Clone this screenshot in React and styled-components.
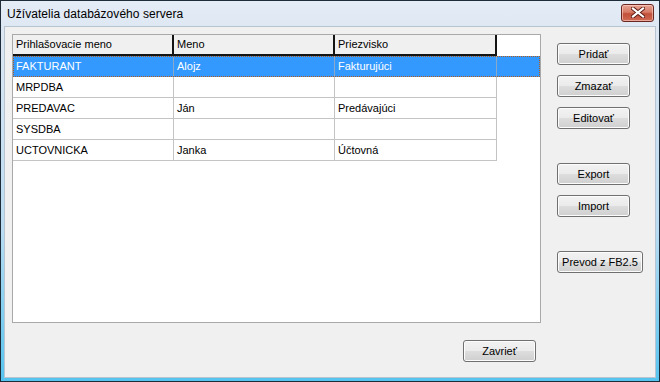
import React from "react";
import styled, { createGlobalStyle, css } from "styled-components";

const Global = createGlobalStyle`
  html, body { margin: 0; padding: 0; background: #ffffff; }
  body { font-family: "Liberation Sans", Arial, sans-serif; font-size: 11px; color: #000; }
  * { box-sizing: border-box; }
`;

const Frame = styled.div`
  width: 660px;
  height: 382px;
  border: 1px solid #1e2b38;
  background: linear-gradient(180deg, #e4ecf6 0%, #dbe6f2 10%, #b9dcf2 60%, #56c4ef 100%);
  padding: 0 3px 3px 3px;
  display: flex;
  flex-direction: column;
`;

const TitleBar = styled.div`
  height: 25px;
  display: flex;
  align-items: center;
  justify-content: space-between;
  padding: 0 2px 0 3px;
`;

const Caption = styled.span`
  font-size: 12px;
  color: #000;
  letter-spacing: 0.05px;
`;

const CloseBtn = styled.div`
  width: 33px;
  height: 18px;
  margin-top: -2px;
  border: 1px solid #6b2620;
  border-radius: 3px;
  background: linear-gradient(180deg, #e7a393 0%, #d77a66 45%, #c2503a 55%, #d06a55 100%);
  box-shadow: inset 0 0 0 1px rgba(255, 220, 210, 0.55);
  display: flex;
  align-items: center;
  justify-content: center;
`;

const Client = styled.div`
  flex: 1;
  background: #f0f0f0;
  border: 1px solid #b8c4d0;
  display: flex;
  flex-direction: column;
  padding: 7px 0 0 7px;
`;

const MainRow = styled.div`
  display: flex;
  align-items: flex-start;
`;

const ListBox = styled.div`
  width: 529px;
  height: 289px;
  background: #ffffff;
  border: 1px solid #a9a9a9;
  display: flex;
  flex-direction: column;
`;

const Row = styled.div`
  display: flex;
  height: 21px;
  ${(p) =>
    p.$selected &&
    css`
      background: #3399ff;
      color: #ffffff;
      outline: 1px dotted #b25c1c;
      outline-offset: -1px;
    `}
`;

const HeaderCell = styled.div`
  width: ${(p) => p.$w}px;
  height: 21px;
  background: #f0f0f0;
  border-right: 2px solid #141414;
  border-bottom: 2px solid #141414;
  padding: 3px 0 0 3px;
  white-space: nowrap;
`;

const Cell = styled.div`
  width: ${(p) => p.$w}px;
  height: 21px;
  border-right: 1px solid ${(p) => (p.$selected ? "#8aa8c8" : "#c4c4c4")};
  border-bottom: 1px solid ${(p) => (p.$selected ? "transparent" : "#c4c4c4")};
  padding: 4px 0 0 3px;
  white-space: nowrap;
`;

const SideColumn = styled.div`
  display: flex;
  flex-direction: column;
  margin: 9px 0 0 16px;
`;

const Button = styled.button`
  height: 22px;
  width: ${(p) => p.$w || 73}px;
  margin-top: ${(p) => p.$gap || 0}px;
  font: inherit;
  color: #000;
  padding: 0;
  border: 1px solid #707070;
  border-radius: 3px;
  background: linear-gradient(180deg, #f2f2f2 0%, #ebebeb 48%, #dddddd 52%, #cfcfcf 100%);
  box-shadow: inset 0 0 0 1px #fcfcfc;
`;

const BottomRow = styled.div`
  display: flex;
  justify-content: flex-end;
  padding: 17px 119px 0 0;
`;

const columns = [
  { key: "login", title: "Prihlašovacie meno", w: 161 },
  { key: "name", title: "Meno", w: 161 },
  { key: "surname", title: "Priezvisko", w: 162 },
];

const users = [
  { login: "FAKTURANT", name: "Alojz", surname: "Fakturujúci", selected: true },
  { login: "MRPDBA", name: "", surname: "" },
  { login: "PREDAVAC", name: "Ján", surname: "Predávajúci" },
  { login: "SYSDBA", name: "", surname: "" },
  { login: "UCTOVNICKA", name: "Janka", surname: "Účtovná" },
];

const CloseIcon = () => (
  <svg width="14" height="11" viewBox="0 0 14 11">
    <path d="M2 1.5 L12 9.5 M12 1.5 L2 9.5" stroke="#5a1a12" strokeWidth="4" strokeLinecap="square" />
    <path d="M2 1.5 L12 9.5 M12 1.5 L2 9.5" stroke="#ffffff" strokeWidth="2.2" strokeLinecap="square" />
  </svg>
);

export default function App() {
  return (
    <>
      <Global />
      <Frame>
        <TitleBar>
          <Caption>Užívatelia databázového servera</Caption>
          <CloseBtn>
            <CloseIcon />
          </CloseBtn>
        </TitleBar>
        <Client>
          <MainRow>
            <ListBox>
              <Row>
                {columns.map((c) => (
                  <HeaderCell key={c.key} $w={c.w}>
                    {c.title}
                  </HeaderCell>
                ))}
              </Row>
              {users.map((u) => (
                <Row key={u.login} $selected={u.selected}>
                  {columns.map((c) => (
                    <Cell key={c.key} $w={c.w} $selected={u.selected}>
                      {u[c.key]}
                    </Cell>
                  ))}
                </Row>
              ))}
            </ListBox>
            <SideColumn>
              <Button>Pridať</Button>
              <Button $gap={10}>Zmazať</Button>
              <Button $gap={10}>Editovať</Button>
              <Button $gap={34}>Export</Button>
              <Button $gap={10}>Import</Button>
              <Button $gap={34} $w={86}>Prevod z FB2.5</Button>
            </SideColumn>
          </MainRow>
          <BottomRow>
            <Button>Zavrieť</Button>
          </BottomRow>
        </Client>
      </Frame>
    </>
  );
}
